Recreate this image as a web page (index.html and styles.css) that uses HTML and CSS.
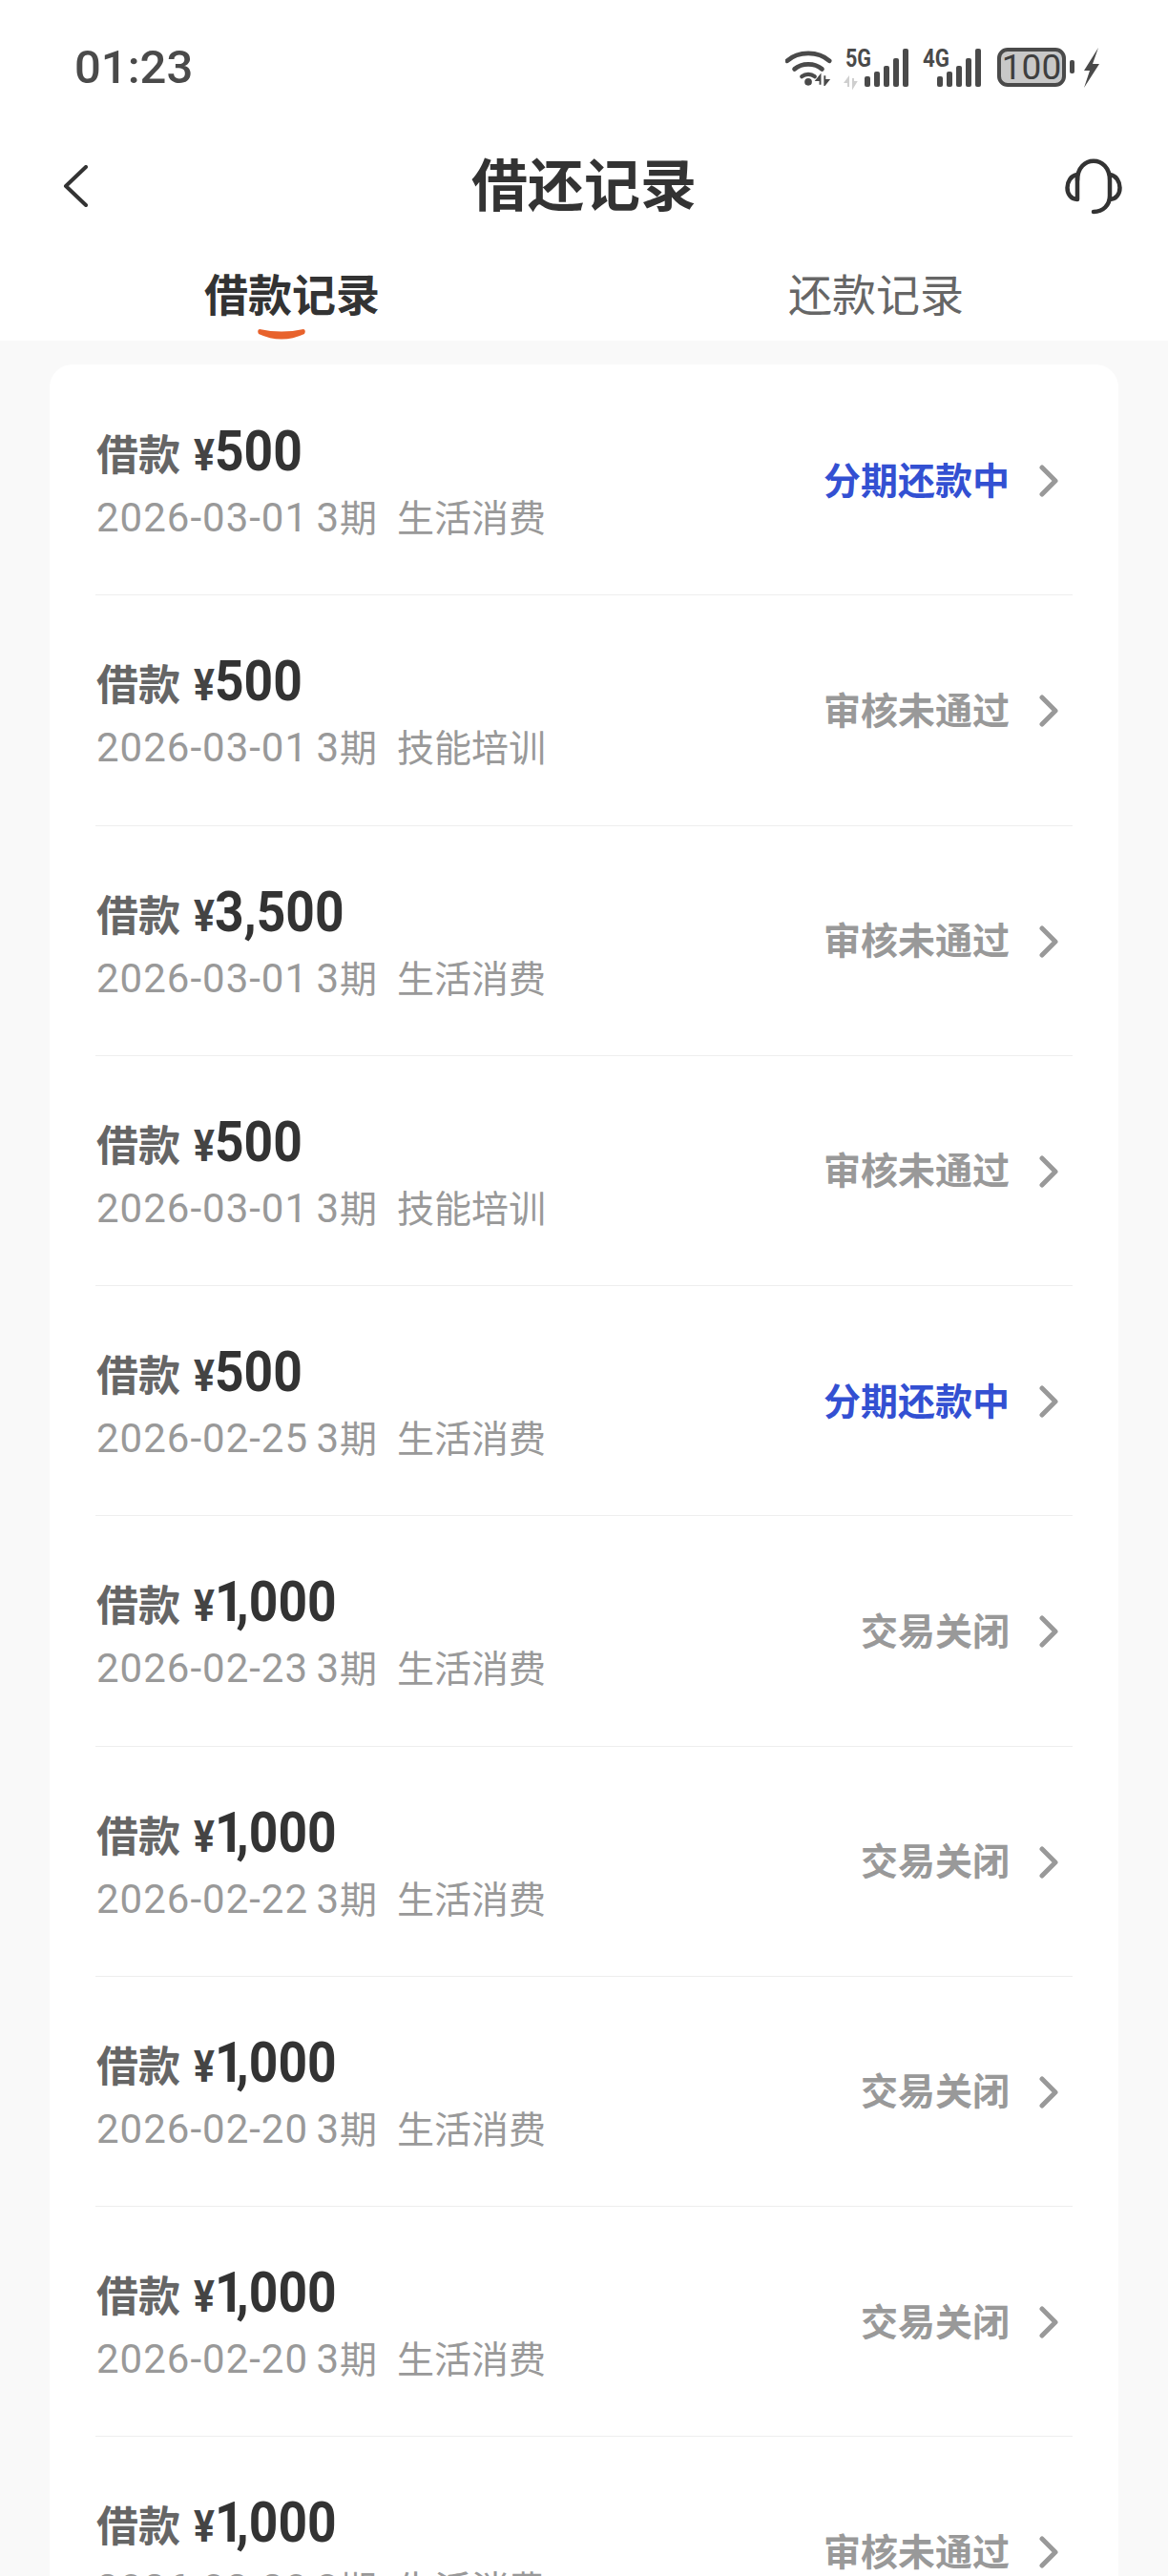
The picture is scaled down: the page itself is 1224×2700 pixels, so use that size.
FILE: index.html
```html
<!DOCTYPE html>
<html lang="zh-CN">

<head>
    <meta charset="UTF-8">
    <meta name="viewport" content="width=device-width, initial-scale=1.0">
    <title>借还记录</title>
    <link rel="stylesheet" href="styles.css">
</head>

<body>
    <div class="page">
        <div class="top">
            <div class="status-bar">
                <span class="time">01:23</span>
                <div class="status-icons">
                    <svg class="wifi" width="49" height="39" viewBox="0 0 51 40">
                        <path d="M2 13 C14 2 36 2 48 13" fill="none" stroke="#4a4a4a" stroke-width="5" stroke-linecap="round" />
                        <path d="M10 22 C18 15 32 15 40 22" fill="none" stroke="#4a4a4a" stroke-width="5" stroke-linecap="round" />
                        <path d="M18 30 C22 27 28 27 32 30" fill="none" stroke="#4a4a4a" stroke-width="4.5" stroke-linecap="round" />
                        <circle cx="25" cy="36" r="4" fill="#4a4a4a" />
                        <path d="M38 39 V29 L34 34 H38 M43 29 V39 L47 34 H43" fill="#4a4a4a" stroke="#4a4a4a" stroke-width="2" />
                    </svg>
                    <svg class="signal" width="67" height="42" viewBox="0 0 67 42">
                        <text x="0" y="20" class="net-text" textLength="27" lengthAdjust="spacingAndGlyphs">5G</text>
                        <path d="M3 41 V32 L0 36 H3 M8 32 V41 L11 36 H8" fill="#cfcfcf" stroke="#cfcfcf" stroke-width="2" />
                        <rect x="20" y="30" width="6" height="11" rx="2" fill="#4a4a4a" />
                        <rect x="30" y="25" width="6" height="16" rx="2" fill="#4a4a4a" />
                        <rect x="40" y="19" width="6" height="22" rx="2" fill="#4a4a4a" />
                        <rect x="50" y="11" width="6" height="30" rx="2" fill="#4a4a4a" />
                        <rect x="60" y="1" width="6" height="40" rx="2" fill="#4a4a4a" />
                    </svg>
                    <svg class="signal" width="62" height="42" viewBox="0 0 62 42">
                        <text x="0" y="20" class="net-text" textLength="28" lengthAdjust="spacingAndGlyphs">4G</text>
                        <rect x="15" y="30" width="6" height="11" rx="2" fill="#4a4a4a" />
                        <rect x="25" y="25" width="6" height="16" rx="2" fill="#4a4a4a" />
                        <rect x="35" y="19" width="6" height="22" rx="2" fill="#4a4a4a" />
                        <rect x="45" y="11" width="6" height="30" rx="2" fill="#4a4a4a" />
                        <rect x="55" y="1" width="6" height="40" rx="2" fill="#4a4a4a" />
                    </svg>
                    <div class="battery">
                        <span class="battery-num">100</span>
                    </div>
                    <span class="battery-nub"></span>
                    <svg class="bolt" width="17" height="42" viewBox="0 0 17 42">
                        <path d="M16 0 L1 24 H7 L1 42 L17 17 H10 Z" fill="#4a4a4a" />
                    </svg>
                </div>
            </div>
            <div class="nav">
                <svg class="back" width="26" height="44" viewBox="0 0 26 44">
                    <path d="M24 2 L3 22 L24 42" fill="none" stroke="#333" stroke-width="4" stroke-linecap="round" stroke-linejoin="round" />
                </svg>
                <h1 class="title">借还记录</h1>
                <svg class="headset" width="60" height="60" viewBox="0 0 60 60">
                    <path d="M13 24 C13 -3 47 -3 47 24 V40 C47 50 40 57 30 57" fill="none" stroke="#333" stroke-width="4.5" stroke-linecap="round" />
                    <path d="M13 18 C-1 20 -1 44 13 44 Z" fill="none" stroke="#333" stroke-width="4.5" stroke-linejoin="round" />
                    <path d="M47 18 C61 20 61 44 47 44" fill="none" stroke="#333" stroke-width="4.5" stroke-linecap="round" />
                </svg>
            </div>
            <div class="tabs">
                <div class="tab active">借款记录
                    <svg class="smile" width="50" height="14" viewBox="0 0 50 14">
                        <path d="M2 2 Q25 7 48 2 Q51 3 49 7 Q25 18 1 7 Q-1 3 2 2 Z" fill="#e8622c" />
                    </svg>
                </div>
                <div class="tab">还款记录</div>
            </div>
        </div>

        <div class="card">
            <div class="row">
                <div class="info">
                    <div class="amount-line"><span class="label">借款</span><span class="amount"><span class="yen">¥</span>500</span></div>
                    <div class="meta"><span class="num">2026-03-01 3</span>期<span class="purpose">生活消费</span></div>
                </div>
                <span class="state blue">分期还款中</span>
                <svg class="arrow" width="20" height="34" viewBox="0 0 20 34"><path d="M3 3 L17 17 L3 31" /></svg>
            </div>
            <div class="row">
                <div class="info">
                    <div class="amount-line"><span class="label">借款</span><span class="amount"><span class="yen">¥</span>500</span></div>
                    <div class="meta"><span class="num">2026-03-01 3</span>期<span class="purpose">技能培训</span></div>
                </div>
                <span class="state">审核未通过</span>
                <svg class="arrow" width="20" height="34" viewBox="0 0 20 34"><path d="M3 3 L17 17 L3 31" /></svg>
            </div>
            <div class="row">
                <div class="info">
                    <div class="amount-line"><span class="label">借款</span><span class="amount"><span class="yen">¥</span>3,500</span></div>
                    <div class="meta"><span class="num">2026-03-01 3</span>期<span class="purpose">生活消费</span></div>
                </div>
                <span class="state">审核未通过</span>
                <svg class="arrow" width="20" height="34" viewBox="0 0 20 34"><path d="M3 3 L17 17 L3 31" /></svg>
            </div>
            <div class="row">
                <div class="info">
                    <div class="amount-line"><span class="label">借款</span><span class="amount"><span class="yen">¥</span>500</span></div>
                    <div class="meta"><span class="num">2026-03-01 3</span>期<span class="purpose">技能培训</span></div>
                </div>
                <span class="state">审核未通过</span>
                <svg class="arrow" width="20" height="34" viewBox="0 0 20 34"><path d="M3 3 L17 17 L3 31" /></svg>
            </div>
            <div class="row">
                <div class="info">
                    <div class="amount-line"><span class="label">借款</span><span class="amount"><span class="yen">¥</span>500</span></div>
                    <div class="meta"><span class="num">2026-02-25 3</span>期<span class="purpose">生活消费</span></div>
                </div>
                <span class="state blue">分期还款中</span>
                <svg class="arrow" width="20" height="34" viewBox="0 0 20 34"><path d="M3 3 L17 17 L3 31" /></svg>
            </div>
            <div class="row">
                <div class="info">
                    <div class="amount-line"><span class="label">借款</span><span class="amount"><span class="yen">¥</span><span class="one">1</span>,000</span></div>
                    <div class="meta"><span class="num">2026-02-23 3</span>期<span class="purpose">生活消费</span></div>
                </div>
                <span class="state">交易关闭</span>
                <svg class="arrow" width="20" height="34" viewBox="0 0 20 34"><path d="M3 3 L17 17 L3 31" /></svg>
            </div>
            <div class="row">
                <div class="info">
                    <div class="amount-line"><span class="label">借款</span><span class="amount"><span class="yen">¥</span><span class="one">1</span>,000</span></div>
                    <div class="meta"><span class="num">2026-02-22 3</span>期<span class="purpose">生活消费</span></div>
                </div>
                <span class="state">交易关闭</span>
                <svg class="arrow" width="20" height="34" viewBox="0 0 20 34"><path d="M3 3 L17 17 L3 31" /></svg>
            </div>
            <div class="row">
                <div class="info">
                    <div class="amount-line"><span class="label">借款</span><span class="amount"><span class="yen">¥</span><span class="one">1</span>,000</span></div>
                    <div class="meta"><span class="num">2026-02-20 3</span>期<span class="purpose">生活消费</span></div>
                </div>
                <span class="state">交易关闭</span>
                <svg class="arrow" width="20" height="34" viewBox="0 0 20 34"><path d="M3 3 L17 17 L3 31" /></svg>
            </div>
            <div class="row">
                <div class="info">
                    <div class="amount-line"><span class="label">借款</span><span class="amount"><span class="yen">¥</span><span class="one">1</span>,000</span></div>
                    <div class="meta"><span class="num">2026-02-20 3</span>期<span class="purpose">生活消费</span></div>
                </div>
                <span class="state">交易关闭</span>
                <svg class="arrow" width="20" height="34" viewBox="0 0 20 34"><path d="M3 3 L17 17 L3 31" /></svg>
            </div>
            <div class="row">
                <div class="info">
                    <div class="amount-line"><span class="label">借款</span><span class="amount"><span class="yen">¥</span><span class="one">1</span>,000</span></div>
                    <div class="meta"><span class="num">2026-02-20 3</span>期<span class="purpose">生活消费</span></div>
                </div>
                <span class="state">审核未通过</span>
                <svg class="arrow" width="20" height="34" viewBox="0 0 20 34"><path d="M3 3 L17 17 L3 31" /></svg>
            </div>
        </div>
    </div>
</body>

</html>
```

FILE: styles.css
```css
html,
body {
    margin: 0px;
    padding: 0px;
}

body {
    font-family: Roboto, "Noto Sans CJK SC", sans-serif;
}

.page {
    width: 1224px;
    height: 2700px;
    overflow: hidden;
    background-color: #f9f9f9;
}

.top {
    height: 357px;
    background-color: #fff;
}

.status-bar {
    height: 141px;
    padding: 50px 72px 0px 78px;
    box-sizing: border-box;
    display: flex;
    justify-content: space-between;
    align-items: flex-start;
}

.time {
    font-size: 49px;
    font-weight: 500;
    line-height: 42px;
    color: #4a4a4a;
}

.status-icons {
    display: flex;
    align-items: flex-start;
}

.wifi {
    margin-top: 1px;
}

.signal {
    margin-left: 14px;
    overflow: visible;
}

.net-text {
    font-size: 25px;
    font-weight: 700;
    fill: #4a4a4a;
}

.battery {
    width: 72px;
    height: 41px;
    margin-left: 16px;
    box-sizing: border-box;
    border: 4px solid #4a4a4a;
    border-radius: 11px;
    background-color: #c8c8c8;
    display: flex;
    justify-content: center;
    align-items: center;
}

.battery-num {
    font-size: 37px;
    line-height: 33px;
    color: #3f3f3f;
}

.battery-nub {
    width: 5px;
    height: 14px;
    margin: 13px 0px 0px 4px;
    border-radius: 2px;
    background-color: #4a4a4a;
}

.bolt {
    margin-left: 9px;
}

.nav {
    height: 108px;
    padding: 0px 48px 0px 66px;
    display: grid;
    grid-template-columns: 1fr auto 1fr;
    align-items: center;
}

.title {
    margin: 0px 0px 9px;
    font-size: 59px;
    font-weight: 700;
    color: #333;
    transform: translateX(-9px);
}

.headset {
    justify-self: end;
}

.tabs {
    display: flex;
    height: 108px;
}

.tab {
    position: relative;
    flex: 1;
    box-sizing: border-box;
    padding-top: 9px;
    text-align: center;
    font-size: 46px;
    line-height: 104px;
    color: #666;
}

.tab.active {
    font-weight: 700;
    color: #333;
}

.smile {
    position: absolute;
    left: 270px;
    bottom: 0px;
}

.card {
    margin: 25px 52px 0px;
    padding: 1px 48px 0px;
    background-color: #fff;
    border-radius: 24px 24px 0px 0px;
}

.row {
    height: 241.25px;
    box-sizing: border-box;
    padding-right: 15px;
    display: flex;
    align-items: center;
    border-bottom: 1px solid #eeeeee;
}

.info {
    flex: 1;
    padding-left: 1px;
}

.amount-line {
    display: flex;
    align-items: baseline;
    height: 62px;
}

.label {
    font-size: 44px;
    font-weight: 700;
    color: #666;
}

.amount {
    margin-left: 14px;
    font-size: 60px;
    font-weight: 700;
    color: #333;
    transform: scaleX(0.89);
    transform-origin: left;
}

.yen {
    font-size: 46px;
    color: #444;
}

.one {
    letter-spacing: -9px;
}

.meta {
    margin-top: 19px;
    font-size: 39px;
    line-height: 50px;
    color: #999;
}

.num {
    font-size: 42px;
    letter-spacing: 1px;
    word-spacing: -3px;
}

.purpose {
    margin-left: 21px;
}

.state {
    margin-bottom: 5px;
    font-size: 39px;
    font-weight: 700;
    color: #999;
}

.state.blue {
    color: #3350d2;
}

.arrow {
    margin-left: 31px;
    margin-top: 2px;
}

.arrow path {
    fill: none;
    stroke: #999;
    stroke-width: 5;
    stroke-linecap: round;
    stroke-linejoin: round;
}
```
